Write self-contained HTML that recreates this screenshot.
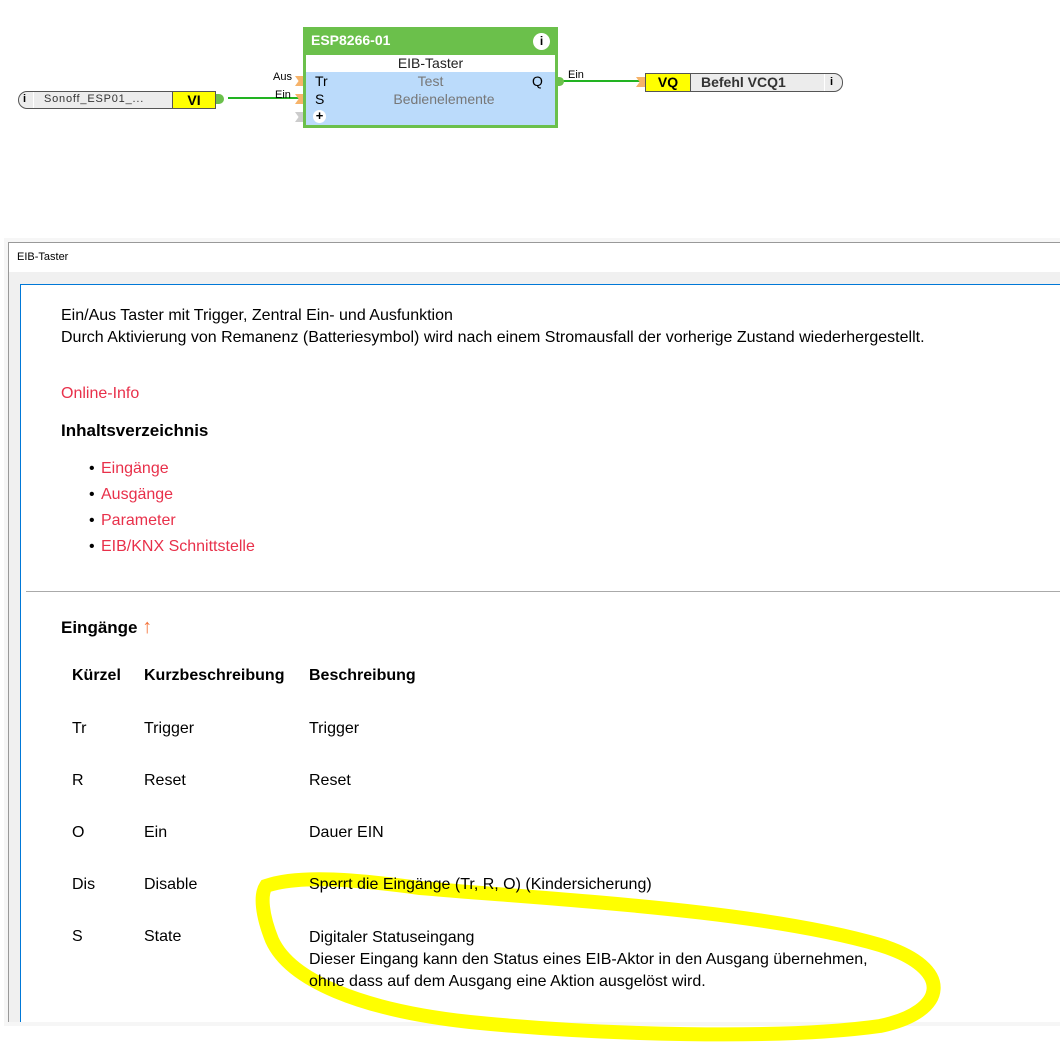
<!DOCTYPE html>
<html><head><meta charset="utf-8"><style>
*{margin:0;padding:0;box-sizing:border-box}
body{width:1060px;height:1063px;background:#fff;position:relative;overflow:hidden;font-family:"Liberation Sans",sans-serif;color:#000}
.a{position:absolute;white-space:nowrap}
.t{font-size:16px;font-family:"Liberation Sans",sans-serif}
.r{color:#e8304a}
.b{font-weight:bold}
</style></head><body>
<!-- diagram -->
<div class="a" style="left:228px;top:97px;width:76px;height:2px;background:#22b322"></div>
<div class="a" style="left:560px;top:80px;width:82px;height:2px;background:#22b322"></div>
<div class="a" style="left:18px;top:91px;width:198px;height:18px;border:1px solid #555;border-radius:9px 0 0 9px;background:#ececec"></div>
<div class="a" style="left:23px;top:93px;font:bold 11px 'Liberation Sans',sans-serif">i</div>
<div class="a" style="left:33px;top:92px;width:1px;height:16px;background:#fff"></div>
<div class="a" style="left:44px;top:93px;font:11px 'Liberation Sans',sans-serif;letter-spacing:0.8px;color:#333">Sonoff_ESP01_...</div>
<div class="a" style="left:172px;top:91px;width:44px;height:18px;background:#ffff00;border:1px solid #555;text-align:center;font:bold 14px/16px 'Liberation Sans',sans-serif">VI</div>
<div class="a" style="left:216px;top:94px;width:8px;height:10px;background:#6bc04b;border-radius:0 5px 5px 0"></div>
<div class="a" style="left:273px;top:71px;font:11px 'Liberation Sans',sans-serif">Aus</div>
<div class="a" style="left:275px;top:89px;font:11px 'Liberation Sans',sans-serif">Ein</div>
<div class="a" style="left:295px;top:76px;width:9px;height:10px;background:#f6b36a;clip-path:polygon(0 0,100% 0,100% 100%,0 100%,40% 50%)"></div>
<div class="a" style="left:295px;top:94px;width:9px;height:10px;background:#f6b36a;clip-path:polygon(0 0,100% 0,100% 100%,0 100%,40% 50%)"></div>
<div class="a" style="left:295px;top:112px;width:9px;height:10px;background:#ccc;clip-path:polygon(0 0,100% 0,100% 100%,0 100%,40% 50%)"></div>
<div class="a" style="left:303px;top:27px;width:255px;height:101px;background:#6bc04b"></div>
<div class="a" style="left:311px;top:32px;font:bold 14px 'Liberation Sans',sans-serif;color:#fff">ESP8266-01</div>
<div class="a" style="left:533px;top:33px;width:17px;height:17px;border-radius:50%;background:#fff;text-align:center;font:bold 12px/17px 'Liberation Sans',sans-serif">i</div>
<div class="a" style="left:306px;top:55px;width:249px;height:17px;background:#fff;text-align:center;font:14px/17px 'Liberation Sans',sans-serif;color:#222">EIB-Taster</div>
<div class="a" style="left:306px;top:72px;width:249px;height:53px;background:#bbdbfb"></div>
<div class="a" style="left:315px;top:73px;font:14px 'Liberation Sans',sans-serif">Tr</div>
<div class="a" style="left:315px;top:91px;font:14px 'Liberation Sans',sans-serif">S</div>
<div class="a" style="left:313px;top:110px;width:13px;height:13px;border-radius:50%;background:#fff;text-align:center;font:bold 13px/12px 'Liberation Sans',sans-serif">+</div>
<div class="a" style="left:306px;top:73px;width:249px;text-align:center;font:14px 'Liberation Sans',sans-serif;color:#777">Test</div>
<div class="a" style="left:306px;top:91px;width:276px;text-align:center;font:14px 'Liberation Sans',sans-serif;color:#777">Bedienelemente</div>
<div class="a" style="left:532px;top:73px;font:14px 'Liberation Sans',sans-serif">Q</div>
<div class="a" style="left:558px;top:77px;width:6px;height:9px;background:#6bc04b;border-radius:0 5px 5px 0"></div>
<div class="a" style="left:568px;top:69px;font:11px 'Liberation Sans',sans-serif">Ein</div>
<div class="a" style="left:636px;top:77px;width:9px;height:10px;background:#f6b36a;clip-path:polygon(0 0,100% 0,100% 100%,0 100%,40% 50%)"></div>
<div class="a" style="left:645px;top:73px;width:198px;height:19px;border:1px solid #555;border-radius:0 9px 9px 0;background:#ececec"></div>
<div class="a" style="left:645px;top:73px;width:46px;height:19px;background:#ffff00;border:1px solid #555;text-align:center;font:bold 14px/17px 'Liberation Sans',sans-serif">VQ</div>
<div class="a" style="left:701px;top:74px;font:bold 14px 'Liberation Sans',sans-serif;color:#333">Befehl VCQ1</div>
<div class="a" style="left:824px;top:74px;width:1px;height:17px;background:#fff"></div>
<div class="a" style="left:830px;top:76px;font:bold 11px 'Liberation Sans',sans-serif">i</div>
<!-- window -->
<div class="a" style="left:4px;top:238px;width:1060px;height:788px;background:#f6f6f6"></div>
<div class="a" style="left:8px;top:242px;width:1060px;height:780px;background:#f0f0f0;border-left:1px solid #999;border-top:1px solid #999"></div>
<div class="a" style="left:9px;top:243px;width:1051px;height:29px;background:#fff"></div>
<div class="a" style="left:17px;top:251px;font:11px 'Liberation Sans',sans-serif">EIB-Taster</div>
<div class="a" style="left:20px;top:284px;width:1045px;height:738px;background:#fff;border-left:1px solid #0078d7;border-top:1px solid #0078d7"></div>
<div class="a t" style="left:61px;top:307px">Ein/Aus Taster mit Trigger, Zentral Ein- und Ausfunktion</div>
<div class="a t" style="left:61px;top:329px">Durch Aktivierung von Remanenz (Batteriesymbol) wird nach einem Stromausfall der vorherige Zustand wiederhergestellt.</div>
<div class="a t r" style="left:61px;top:385px">Online-Info</div>
<div class="a t b" style="left:61px;top:421px;font-size:17px">Inhaltsverzeichnis</div>
<div class="a t" style="left:89px;top:460px">•</div><div class="a t r" style="left:101px;top:460px">Eingänge</div>
<div class="a t" style="left:89px;top:486px">•</div><div class="a t r" style="left:101px;top:486px">Ausgänge</div>
<div class="a t" style="left:89px;top:512px">•</div><div class="a t r" style="left:101px;top:512px">Parameter</div>
<div class="a t" style="left:89px;top:538px">•</div><div class="a t r" style="left:101px;top:538px">EIB/KNX Schnittstelle</div>
<div class="a" style="left:26px;top:591px;width:1034px;height:1px;background:#aaa"></div>
<div class="a t b" style="left:61px;top:616px;font-size:17px">Eingänge <span style="color:#f4743b;font-weight:normal;font-size:20px">↑</span></div>
<div class="a t b" style="left:72px;top:667px;font-size:16px">Kürzel</div>
<div class="a t b" style="left:144px;top:667px;font-size:16px">Kurzbeschreibung</div>
<div class="a t b" style="left:309px;top:667px;font-size:16px">Beschreibung</div>
<div class="a t" style="left:72px;top:720px">Tr</div><div class="a t" style="left:144px;top:720px">Trigger</div><div class="a t" style="left:309px;top:720px">Trigger</div>
<div class="a t" style="left:72px;top:772px">R</div><div class="a t" style="left:144px;top:772px">Reset</div><div class="a t" style="left:309px;top:772px">Reset</div>
<div class="a t" style="left:72px;top:824px">O</div><div class="a t" style="left:144px;top:824px">Ein</div><div class="a t" style="left:309px;top:824px">Dauer EIN</div>
<div class="a t" style="left:72px;top:876px">Dis</div><div class="a t" style="left:144px;top:876px">Disable</div>
<div class="a t" style="left:72px;top:928px">S</div><div class="a t" style="left:144px;top:928px">State</div>
<svg class="a" style="left:0;top:0" width="1060" height="1063"><path d="M266,886 C300,874 360,880 420,888 C560,900 760,910 880,945 C955,968 948,1012 880,1026 C780,1040 600,1035 470,1022 C360,1010 290,980 272,940 C262,915 260,895 266,886 Z" fill="none" stroke="#ffff00" stroke-width="14"/></svg>
<div class="a t" style="left:309px;top:876px">Sperrt die Eingänge (Tr, R, O) (Kindersicherung)</div>
<div class="a t" style="left:309px;top:927px;line-height:22px">Digitaler Statuseingang<br>Dieser Eingang kann den Status eines EIB-Aktor in den Ausgang übernehmen,<br>ohne dass auf dem Ausgang eine Aktion ausgelöst wird.</div>
</body></html>
